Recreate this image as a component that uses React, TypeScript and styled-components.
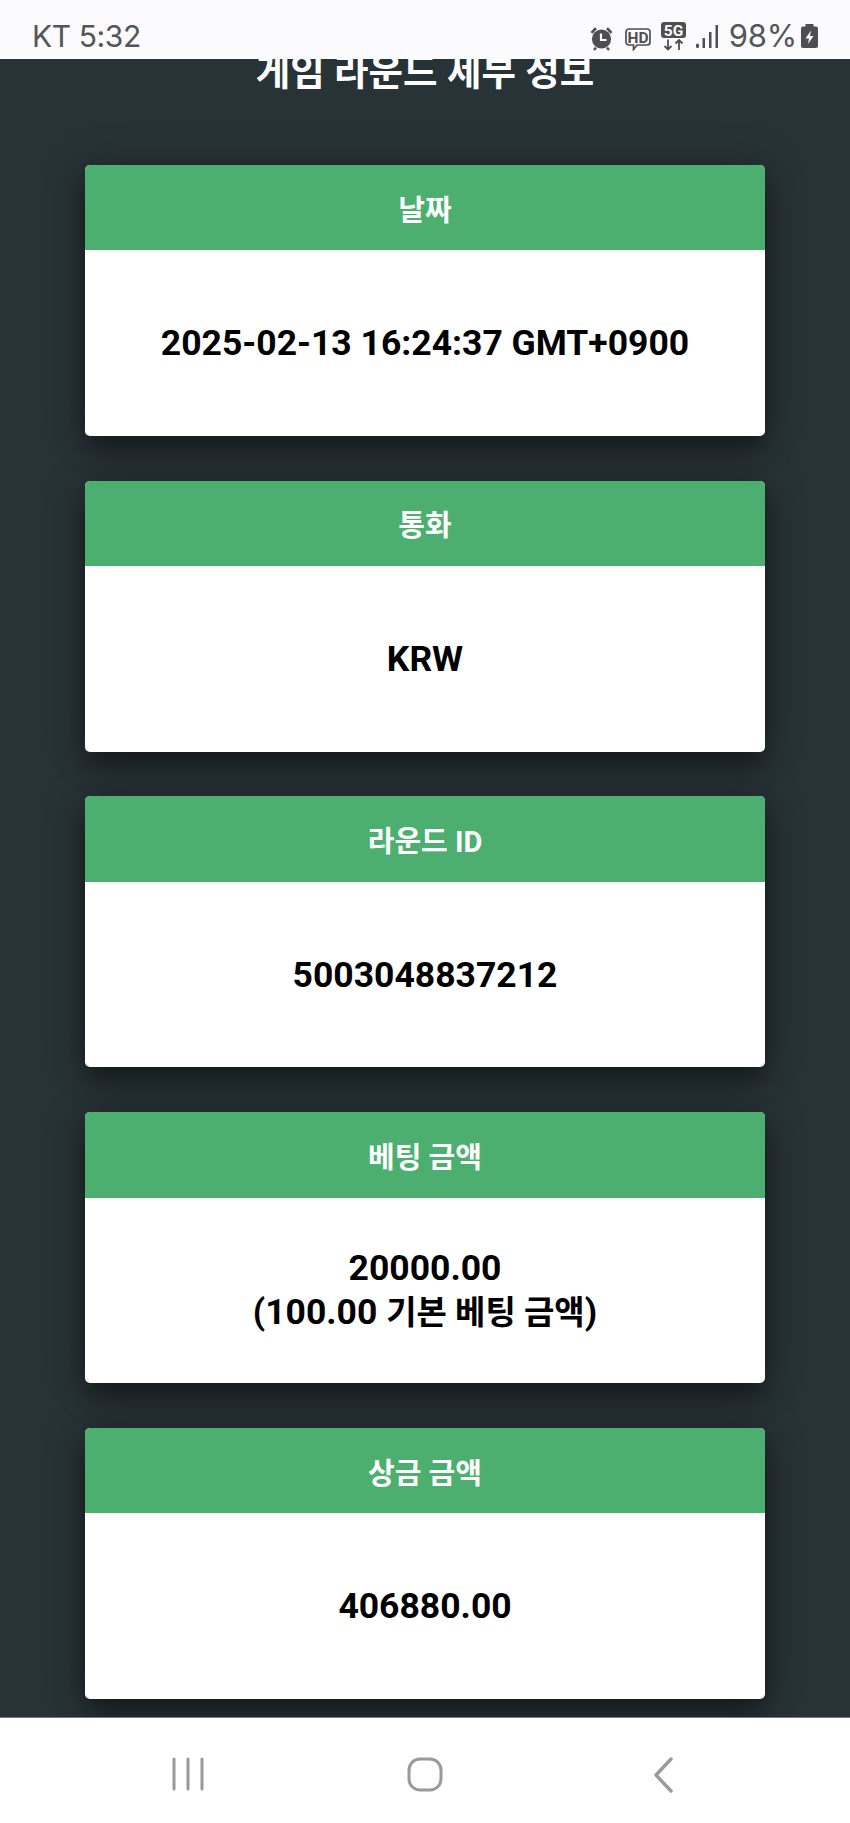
import React from 'react';
import styled, { createGlobalStyle } from 'styled-components';

const GlobalStyle = createGlobalStyle`
  html, body {
    margin: 0;
    padding: 0;
    background: #ffffff;
  }
  body {
    font-family: Roboto, "Noto Sans CJK KR", sans-serif;
  }
`;

const Phone = styled.div`
  width: 850px;
  height: 1823px;
  display: flex;
  flex-direction: column;
  overflow: hidden;
`;

const StatusBar = styled.div`
  height: 59px;
  flex: none;
  box-sizing: border-box;
  padding: 0 32px 5px 32px;
  display: flex;
  justify-content: space-between;
  align-items: flex-end;
  background: #fbfafc;
  color: #555558;
  position: relative;
  z-index: 1;
`;

const StatusText = styled.span`
  font-family: Inter, Roboto, sans-serif;
  font-size: 30px;
  line-height: 36px;
  letter-spacing: -0.4px;
`;

const BatteryText = styled(StatusText)`
  font-size: 31px;
  letter-spacing: -0.2px;
  margin-right: 4px;
`;

const StatusIcons = styled.div`
  display: flex;
  align-items: center;
  height: 36px;
`;

const IconSlot = styled.svg<{ $gap?: number }>`
  display: block;
  flex: none;
  margin-right: ${p => p.$gap ?? 0}px;
`;

const Content = styled.main`
  flex: 1;
  min-height: 0;
  overflow: hidden;
  box-sizing: border-box;
  padding: 0 85px;
  display: flex;
  flex-direction: column;
  gap: 44.75px;
  background: #283338;
`;

const Title = styled.h1`
  margin: -9px 0 26px;
  height: 44px;
  flex: none;
  font-size: 37.5px;
  line-height: 44px;
  font-weight: 700;
  text-align: center;
  color: #ffffff;
`;

const CardShadow = styled.div`
  flex: none;
  border-radius: 5px;
  box-shadow: 0 14px 28px rgba(0, 0, 0, 0.42), 0 0 44px rgba(0, 0, 0, 0.22);
`;

const Card = styled.section`
  height: 271px;
  display: flex;
  flex-direction: column;
  overflow: hidden;
  border-radius: 5px;
  background: #ffffff;
`;

const CardHeader = styled.div`
  height: 85.5px;
  flex: none;
  display: flex;
  align-items: center;
  justify-content: center;
  background: #4caf6f;
  color: #ffffff;
  font-size: 29px;
  font-weight: 700;
`;

const CardBody = styled.div`
  flex: 1;
  display: flex;
  align-items: center;
  justify-content: center;
  text-align: center;
  color: #000000;
  font-size: 35.5px;
  line-height: 44px;
  font-weight: 700;
`;

const Hangul = styled.span`
  font-size: 33px;
`;

const NavBar = styled.nav`
  height: 106px;
  flex: none;
  display: grid;
  grid-template-columns: repeat(3, 237.5px);
  justify-content: center;
  align-items: start;
  justify-items: center;
  padding-top: 39px;
  box-sizing: border-box;
  background: #ffffff;
  border-top: 1px solid #77797a;
`;

const rounds = [
  { label: '날짜', value: <div>2025-02-13 16:24:37 GMT+0900</div> },
  { label: '통화', value: <div>KRW</div> },
  { label: '라운드 ID', value: <div>5003048837212</div> },
  {
    label: '베팅 금액',
    value: (
      <div>
        20000.00
        <br />
        (100.00 <Hangul>기본 베팅 금액</Hangul>)
      </div>
    ),
  },
  { label: '상금 금액', value: <div>406880.00</div> },
];

// status icons all share a 30px tall box so they line up on one row
const AlarmIcon = () => (
  <IconSlot $gap={12} width="23" height="30" viewBox="0 0 23 30" fill="#4f4f52">
    <circle cx="11.5" cy="18" r="9.6" />
    <path d="M.5 11 5 6.200l2 1.800L2.500 12.800ZM22.500 11 18 6.200 16 8l4.500 4.800Z" />
    <path d="M11 12.500v6.500h5.500" fill="none" stroke="#fbfafc" strokeWidth="2.200" />
    <path d="M4 29l2-2.500M19 29l-2-2.500" stroke="#4f4f52" strokeWidth="2.400" />
  </IconSlot>
);

const HdIcon = () => (
  <IconSlot $gap={10} width="26" height="30" viewBox="0 0 26 30">
    <path
      d="M4 8h18a3 3 0 0 1 3 3v10a3 3 0 0 1-3 3H12l-3.500 4.500V24H4a3 3 0 0 1-3-3V11a3 3 0 0 1 3-3Z"
      fill="none"
      stroke="#4f4f52"
      strokeWidth="1.700"
    />
    <text x="13" y="21.500" textAnchor="middle" fontFamily="Roboto" fontWeight="700" fontSize="15.5" fill="#4f4f52">
      HD
    </text>
  </IconSlot>
);

const FiveGIcon = () => (
  <IconSlot $gap={10} width="25" height="30" viewBox="0 0 25 30">
    <rect x="0" y="1" width="25" height="16" rx="3" fill="#4f4f52" />
    <text x="12.500" y="14.500" textAnchor="middle" fontFamily="Roboto" fontWeight="700" fontSize="15.500" fill="#fbfafc">
      5G
    </text>
    <path d="M7 18.500v10M3.500 25 7 28.500 10.500 25M18 29V19M14.500 22.500 18 19l3.500 3.500" fill="none" stroke="#4f4f52" strokeWidth="1.800" />
  </IconSlot>
);

const SignalIcon = () => (
  <IconSlot $gap={11} width="22" height="30" viewBox="0 0 22 30">
    <rect x="0" y="22.500" width="3" height="4.500" rx="1.500" fill="#4f4f52" />
    <rect x="6.500" y="17" width="2.500" height="10" fill="#4f4f52" />
    <rect x="13" y="11" width="2.500" height="16" fill="#4f4f52" />
    <rect x="19.500" y="4" width="2.500" height="23" fill="#4f4f52" />
  </IconSlot>
);

const BatteryIcon = () => (
  <IconSlot width="17" height="30" viewBox="0 0 17 30">
    <path d="M4.500 3h8v2.500H15a2 2 0 0 1 2 2V25a2 2 0 0 1-2 2H2a2 2 0 0 1-2-2V7.500a2 2 0 0 1 2-2h2.500Z" fill="#4f4f52" />
    <path d="M10 9.500 4.500 17.500H8L7 23l5.500-8H9Z" fill="#fbfafc" />
  </IconSlot>
);

const RecentsIcon = () => (
  <svg width="32" height="34" viewBox="0 0 32 34" fill="none" stroke="#9a9a9c" strokeWidth="3" strokeLinecap="round">
    <path d="M2 2v30M16 2v30M30 2v30" />
  </svg>
);

const HomeIcon = () => (
  <svg width="36" height="35" viewBox="0 0 36 35" fill="none" stroke="#9a9a9c" strokeWidth="3">
    <rect x="2" y="2" width="32" height="31" rx="11" />
  </svg>
);

const BackIcon = () => (
  <svg width="20" height="36" viewBox="0 0 20 36" fill="none" stroke="#9a9a9c" strokeWidth="3.400" strokeLinecap="round" strokeLinejoin="round">
    <path d="M18 2 3 18l15 16" />
  </svg>
);

export default function App() {
  return (
    <Phone>
      <GlobalStyle />
      <StatusBar>
        <StatusText>KT 5:32</StatusText>
        <StatusIcons>
          <AlarmIcon />
          <HdIcon />
          <FiveGIcon />
          <SignalIcon />
          <BatteryText>98%</BatteryText>
          <BatteryIcon />
        </StatusIcons>
      </StatusBar>
      <Content>
        <Title>게임 라운드 세부 정보</Title>
        {rounds.map(round => (
          <CardShadow key={round.label}>
            <Card>
              <CardHeader>{round.label}</CardHeader>
              <CardBody>{round.value}</CardBody>
            </Card>
          </CardShadow>
        ))}
      </Content>
      <NavBar>
        <RecentsIcon />
        <HomeIcon />
        <BackIcon />
      </NavBar>
    </Phone>
  );
}
